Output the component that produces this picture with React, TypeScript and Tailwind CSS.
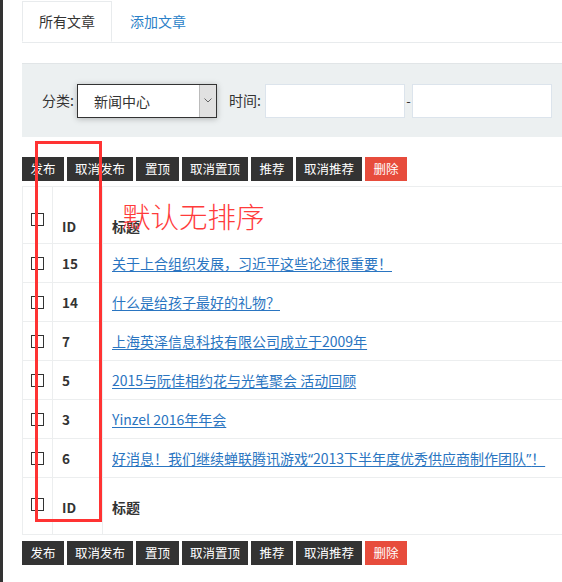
import React from "react";

const font = { fontFamily: '"Noto Sans CJK SC", "Noto Sans", sans-serif' };

const actions = [
  { label: "发布", w: "w-[42px]" },
  { label: "取消发布", w: "w-[66px]" },
  { label: "置顶", w: "w-[43px]" },
  { label: "取消置顶", w: "w-[66px]" },
  { label: "推荐", w: "w-[42px]" },
  { label: "取消推荐", w: "w-[66px]" },
];

const rows = [
  { id: 15, title: "关于上合组织发展，习近平这些论述很重要！" },
  { id: 14, title: "什么是给孩子最好的礼物？" },
  { id: 7, title: "上海英泽信息科技有限公司成立于2009年" },
  { id: 5, title: "2015与阮佳相约花与光笔聚会 活动回顾" },
  { id: 3, title: "Yinzel 2016年年会" },
  { id: 6, title: "好消息！我们继续蝉联腾讯游戏“2013下半年度优秀供应商制作团队”！" },
];

// curly quotes are narrow in the original, so give them a latin face
function Title({ text }: { text: string }) {
  const parts = text.split(/([“”])/);
  return (
    <>
      {parts.map((p, i) =>
        p === "“" || p === "”" ? (
          <span key={i} className="font-['Noto_Sans']">
            {p}
          </span>
        ) : (
          <React.Fragment key={i}>{p}</React.Fragment>
        )
      )}
    </>
  );
}

function ActionBar() {
  return (
    <div className="flex gap-[3px]">
      {actions.map((a) => (
        <button
          key={a.label}
          className={`${a.w} h-[24px] bg-[#333333] text-white text-[12.5px] leading-[24px] text-center`}
        >
          {a.label}
        </button>
      ))}
      <button className="w-[42px] h-[24px] bg-[#e74c3c] text-white text-[12.5px] leading-[24px] text-center">
        删除
      </button>
    </div>
  );
}

function Box() {
  return <span className="block w-[13px] h-[13px] border border-[#333]" />;
}

// header and footer rows share the layout, only the offsets differ
function HeadRow({ footer }: { footer?: boolean }) {
  const boxPad = footer ? "pt-[20px]" : "pt-[26px]";
  const textPad = footer ? "pt-[20px]" : "pt-[30px]";
  return (
    <div className="flex h-[57px] border-b border-[#eceeef]">
      <div className={`w-[30px] shrink-0 border-r border-[#eceeef] flex justify-center ${boxPad}`}>
        <Box />
      </div>
      <div className={`w-[50px] shrink-0 border-r border-[#eceeef] pl-[9px] ${textPad} text-[13.5px] font-bold text-[#333] leading-[18px]`}>
        ID
      </div>
      <div className={`flex-1 pl-[9px] ${textPad} text-[14px] font-bold text-[#333] leading-[18px]`}>
        标题
      </div>
    </div>
  );
}

export default function App() {
  return (
    <div className="flex min-h-[582px] w-[562px] overflow-hidden bg-white text-[#333]" style={font}>
      <div className="w-[3px] shrink-0 bg-[#333]" />
      <div className="relative ml-[19px] w-[540px] shrink-0">
        {/* Tabs */}
        <div className="flex pt-[1px] border-b border-[#e8ebed]">
          <div className="h-[41px] px-[16px] -mb-px border border-[#e8ebed] border-b-white bg-white flex items-center text-[14px] text-[#333]">
            所有文章
          </div>
          <div className="h-[41px] px-[18px] flex items-center text-[14px] text-[#2a7fc8]">
            添加文章
          </div>
        </div>

        {/* Filter */}
        <div className="mt-[20px] h-[74px] bg-[#ecf0f1] border-t border-[#e1e5e7] flex items-center pl-[20px]">
          <span className="text-[14px] text-[#333] w-[35px]">分类:</span>
          <div className="flex w-[140px] h-[34px] border border-[#333] bg-white shadow-[0_1px_6px_rgba(0,0,0,0.25)]">
            <span className="flex-1 pl-[16px] text-[14px] leading-[32px] text-[#333]">新闻中心</span>
            <span className="w-[17px] bg-[#e1e1e1] border-l border-[#bbb] flex items-center justify-center">
              <svg width="8" height="5" viewBox="0 0 8 5" fill="none" stroke="#666" strokeWidth="1">
                <path d="M0.5 0.5 L4 4 L7.5 0.5" />
              </svg>
            </span>
          </div>
          <span className="ml-[12px] text-[14px] text-[#333] w-[36px]">时间:</span>
          <div className="w-[140px] h-[34px] bg-white border border-[#dce4ec]" />
          <span className="w-[7px] text-center text-[13px] text-[#333]">-</span>
          <div className="w-[140px] h-[34px] bg-white border border-[#dce4ec]" />
        </div>

        {/* Top actions */}
        <div className="mt-[20px]">
          <ActionBar />
        </div>

        {/* Table */}
        <div className="mt-[5px] border-t border-l border-[#eceeef]">
          <HeadRow />
          {rows.map((r) => (
            <div key={r.id} className="flex h-[39px] border-b border-[#eceeef]">
              <div className="w-[30px] shrink-0 border-r border-[#eceeef] flex items-center justify-center">
                <Box />
              </div>
              <div className="w-[50px] shrink-0 border-r border-[#eceeef] pl-[9px] flex items-center text-[13.5px] font-bold text-[#333]">
                {r.id}
              </div>
              <div className="flex-1 min-w-0 pl-[9px] flex items-center whitespace-nowrap">
                <a href="#" className="text-[14px] text-[#2a75c1] underline underline-offset-2">
                  <Title text={r.title} />
                </a>
              </div>
            </div>
          ))}
          <HeadRow footer />
        </div>

        {/* Bottom actions */}
        <div className="mt-[6px]">
          <ActionBar />
        </div>

        {/* Red annotation */}
        <div className="absolute left-[13px] top-[141px] w-[67px] h-[381px] border-[3px] border-[#ff3333] pointer-events-none" />
        <div className="absolute left-[100px] top-[196px] text-[28.5px] leading-[40px] font-extralight text-[#ff3b3b]">
          默认无排序
        </div>
      </div>
    </div>
  );
}
